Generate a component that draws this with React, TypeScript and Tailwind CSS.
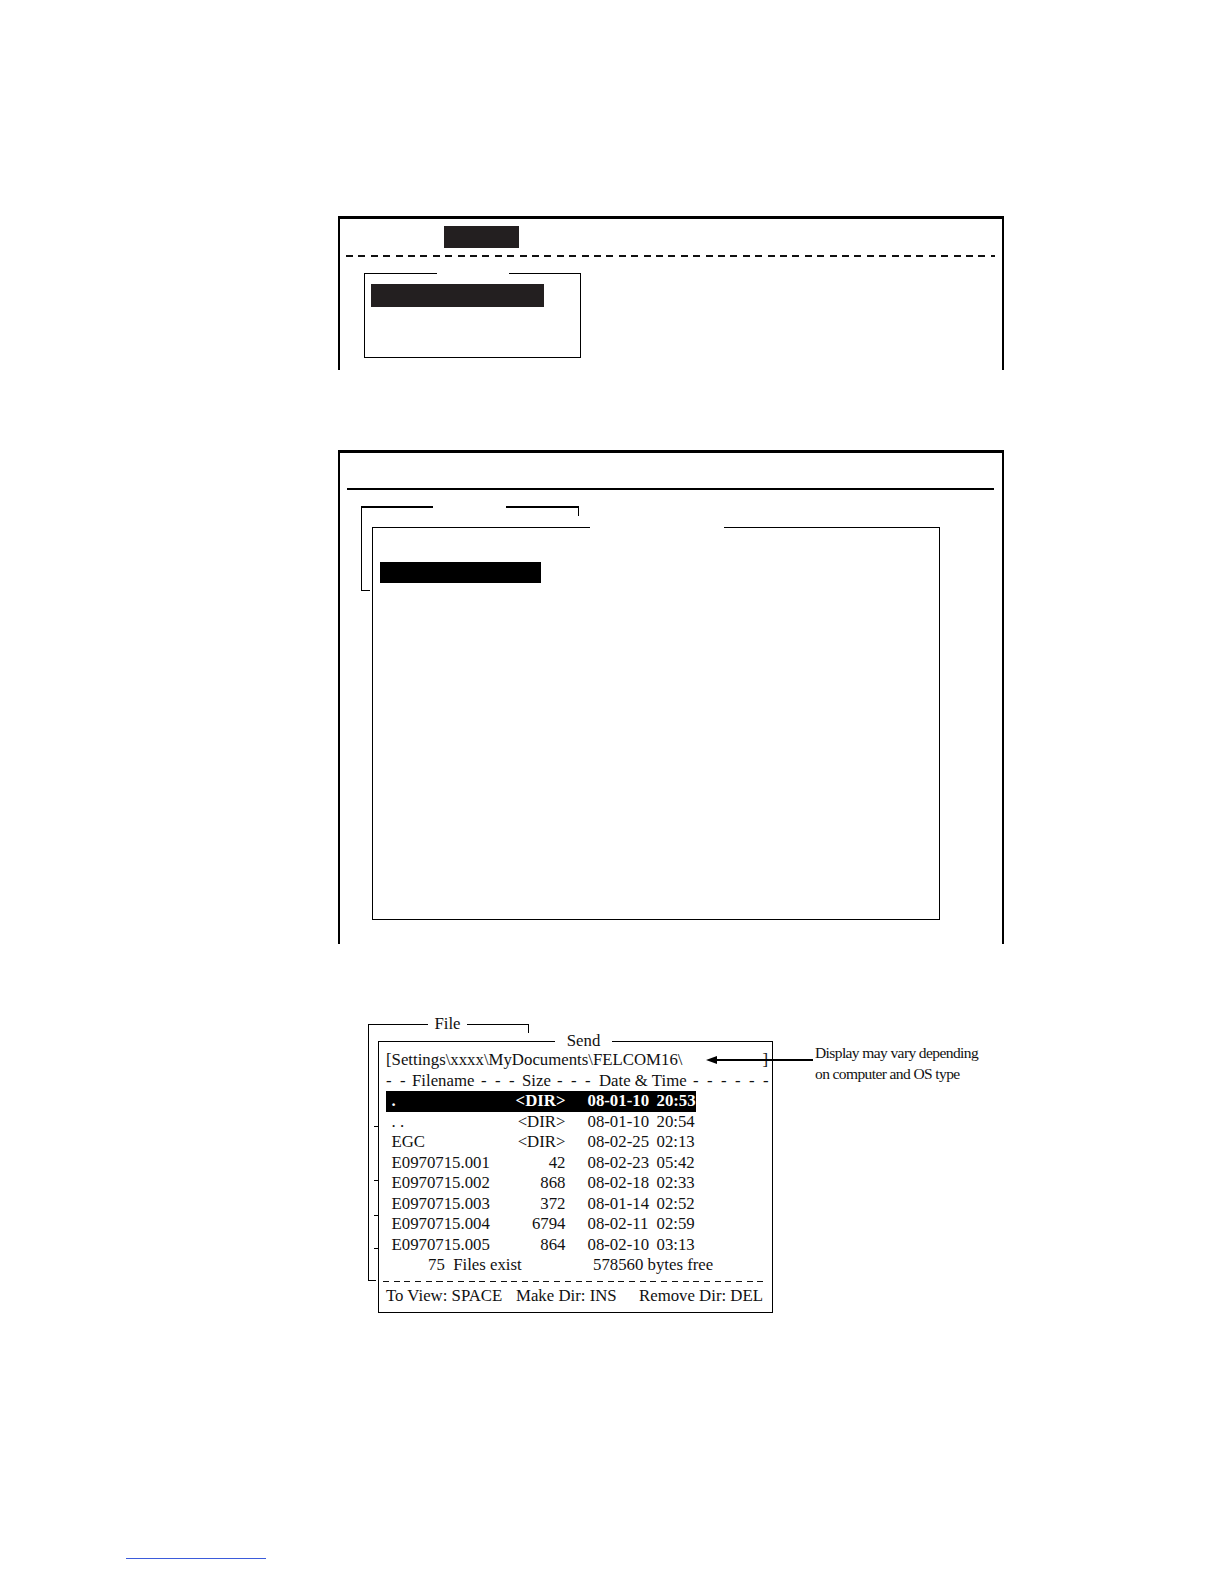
const rows = [
  { name: '. .', size: '<DIR>', date: '08-01-10', time: '20:54' },
  { name: 'EGC', size: '<DIR>', date: '08-02-25', time: '02:13' },
  { name: 'E0970715.001', size: '42', date: '08-02-23', time: '05:42' },
  { name: 'E0970715.002', size: '868', date: '08-02-18', time: '02:33' },
  { name: 'E0970715.003', size: '372', date: '08-01-14', time: '02:52' },
  { name: 'E0970715.004', size: '6794', date: '08-02-11', time: '02:59' },
  { name: 'E0970715.005', size: '864', date: '08-02-10', time: '03:13' },
];

function FileRow({ name, size, date, time, active }: { name: string; size: string; date: string; time: string; active?: boolean }) {
  return (
    <div className={`flex h-[20.5px] w-[310px] items-center pl-[5.5px] leading-[20.5px] ${active ? 'bg-black font-bold text-white' : ''}`}>
      <span className="w-[105px] whitespace-pre">{name}</span>
      <span className="w-[69px] text-right">{size}</span>
      <span className="ml-[22px] w-[69px]">{date}</span>
      <span>{time}</span>
    </div>
  );
}

export default function App() {
  return (
    <div className="h-[1584px] w-[1224px] overflow-hidden bg-white pt-[216px] font-['Liberation_Serif',serif] text-[#111]">
      {/* Panel 1 */}
      <div className="ml-[338px] h-[154px] w-[666px] border-x-2 border-t-[3px] border-black">
        <div className="ml-[104px] mt-[7px] h-[22px] w-[75px] bg-[#231f20]" />
        <div className="ml-[6px] mr-[7px] mt-[7px] h-[2px] bg-[repeating-linear-gradient(90deg,#111_0_7px,transparent_7px_12.4px)]" />
        <div className="ml-[24px] mt-[16px] flex h-[85px] w-[217px] flex-col">
          <div className="flex">
            <div className="h-[11px] w-[73px] border-l-[1.5px] border-t-[1.5px] border-black" />
            <div className="w-[72px]" />
            <div className="h-[11px] flex-1 border-r-[1.5px] border-t-[1.5px] border-black" />
          </div>
          <div className="flex-1 border-x-[1.5px] border-b-[1.5px] border-black pl-[5.5px]">
            <div className="-mt-[0.5px] h-[23px] w-[173px] bg-[#231f20]" />
          </div>
        </div>
      </div>

      {/* Panel 2 */}
      <div className="ml-[338px] mt-[80px] h-[494px] w-[666px] border-x-2 border-t-[3px] border-black">
        <div className="ml-[7px] mr-[8px] mt-[35px] h-[1.5px] bg-black" />
        <div className="mt-[16px] grid">
          <div className="col-start-1 row-start-1 ml-[21px] flex h-[85px] w-[218px] flex-col">
            <div className="flex">
              <div className="h-[10px] w-[72px] border-l-[1.5px] border-t-2 border-black" />
              <div className="w-[73px]" />
              <div className="h-[10px] flex-1 border-r-[1.5px] border-t-2 border-black" />
            </div>
            <div className="w-[9px] flex-1 border-b-[1.5px] border-l-[1.5px] border-black" />
          </div>
          <div className="col-start-1 row-start-1 ml-[32px] mt-[21px] flex h-[393px] w-[568px] flex-col">
            <div className="flex">
              <div className="h-[35px] w-[218px] border-l-[1.5px] border-t-[1.5px] border-black" />
              <div className="w-[134px]" />
              <div className="h-[35px] flex-1 border-r-[1.5px] border-t-[1.5px] border-black" />
            </div>
            <div className="flex-1 border-x-[1.5px] border-b-[1.5px] border-black pl-[6.5px]">
              <div className="h-[21px] w-[161px] bg-black" />
            </div>
          </div>
        </div>
      </div>

      {/* Panel 3: file list */}
      <div className="relative ml-[368px] mt-[72px] flex h-[298px]">
        <div className="grid w-[405px]">
          <div className="col-start-1 row-start-1 flex h-[265px] w-[161px] flex-col">
            <div className="flex h-[16px]">
              <div className="mt-[8px] w-[60px] border-l-[1.5px] border-t-[1.5px] border-black" />
              <span className="w-[39px] text-center text-[16.8px] leading-[16px]">File</span>
              <div className="mt-[8px] h-[9px] flex-1 border-r-[1.5px] border-t-[1.5px] border-black" />
            </div>
            <div className="w-[8px] flex-1 border-b-[1.5px] border-l-[1.5px] border-black" />
          </div>

          <div className="col-start-1 row-start-1 ml-[10px] mt-[16px] flex h-[281px] w-[395px] flex-col text-[16.8px]">
            <div className="flex h-[18px]">
              <div className="mt-[9px] w-[177px] border-l-[1.5px] border-t-[1.5px] border-black" />
              <span className="w-[57px] text-center leading-[18px]">Send</span>
              <div className="mt-[9px] flex-1 border-r-[1.5px] border-t-[1.5px] border-black" />
            </div>
            <div className="flex-1 border-x-[1.5px] border-b-[1.5px] border-black pl-[7px]">
              <div className="flex h-[20.5px] items-center justify-between pr-[4px] leading-[20.5px]">
                <span>[Settings\xxxx\MyDocuments\FELCOM16\</span>
                <span>]</span>
              </div>
              <div className="flex h-[20.5px] items-center whitespace-pre leading-[20.5px]">
                <span className="w-[26px]">-  -</span>
                <span className="w-[69px]">Filename</span>
                <span className="w-[41px]">-  -  -</span>
                <span className="w-[35px]">Size</span>
                <span className="w-[42px]">-  -  -</span>
                <span className="w-[94px]">Date &amp; Time</span>
                <span>-  -  -  -  -  -</span>
              </div>
              <FileRow name="." size="<DIR>" date="08-01-10" time="20:53" active />
              {rows.map((r) => (
                <FileRow key={r.name} {...r} />
              ))}
              <div className="flex h-[20.5px] items-center pl-[42px] leading-[20.5px]">
                <span className="w-[165px] whitespace-pre">75  Files exist</span>
                <span>578560 bytes free</span>
              </div>
              <div className="ml-[-3.5px] mr-[4.5px] mt-[5px] h-px bg-[repeating-linear-gradient(90deg,#111_0_6px,transparent_6px_10.7px)]" />
              <div className="mt-[4px] flex h-[20px] items-center leading-[20px]">
                <span className="w-[130px]">To View: SPACE</span>
                <span className="w-[123px]">Make Dir: INS</span>
                <span>Remove Dir: DEL</span>
              </div>
            </div>
          </div>
        </div>

        <div className="ml-[42px] pt-[26px] text-[15.5px] leading-[21px] tracking-[-0.6px]">
          <p>Display may vary depending</p>
          <p>on computer and OS type</p>
        </div>

        {/* arrow pointing at the path line */}
        <svg className="absolute left-[336px] top-[38px]" width="110" height="12" viewBox="0 0 110 12">
          <polygon points="2,6 13,2 13,10" fill="#000" />
          <line x1="12" y1="6" x2="109" y2="6" stroke="#000" strokeWidth="2" />
        </svg>

        {/* small tick marks left of the send box */}
        <div className="absolute left-[6px] top-[110px] h-px w-[4px] bg-black" />
        <div className="absolute left-[6px] top-[164px] h-px w-[4px] bg-black" />
        <div className="absolute left-[6px] top-[199px] h-px w-[4px] bg-black" />
        <div className="absolute left-[6px] top-[232px] h-px w-[4px] bg-black" />
      </div>

      <div className="ml-[126px] mt-[244px] h-px w-[140px] bg-[#3b5bdb]" />
    </div>
  );
}
